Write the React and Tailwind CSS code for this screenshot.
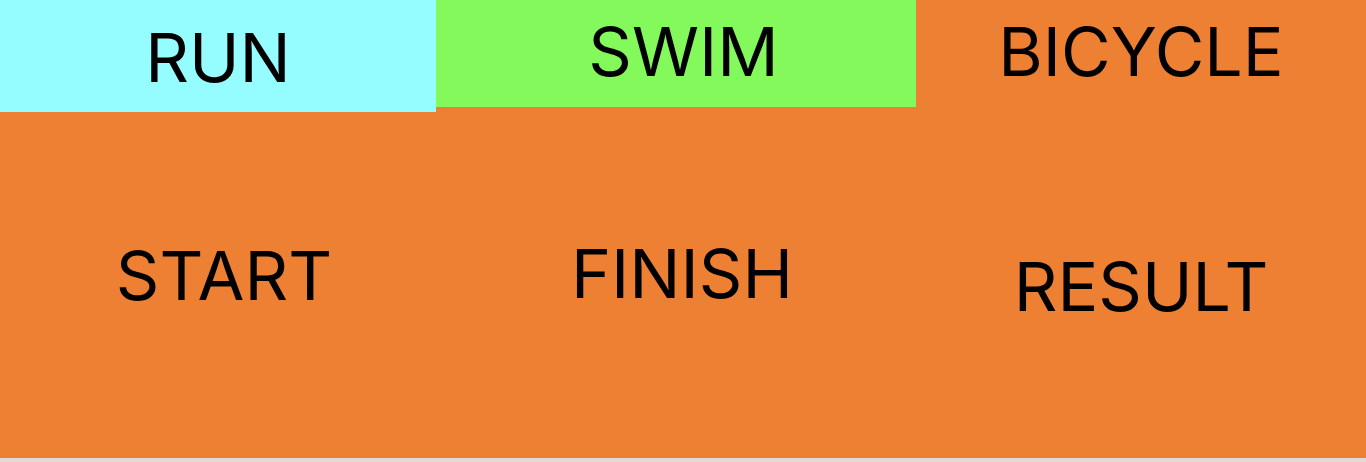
import React from 'react';

const tabs = [
    { label: 'RUN', cls: 'w-[436px] h-[112px] bg-[#95fdff] pt-[23px]' },
    { label: 'SWIM', cls: 'w-[480px] h-[107px] bg-[#84f95b] pl-[15px] pt-[17px]' },
    { label: 'BICYCLE', cls: 'flex-1 h-[107px] pt-[17px]' },
];

export default function App() {
    return (
        <div className="h-[462px] bg-[#dcdcdc] font-['Inter',sans-serif] text-black">
            <div className="h-[458px] bg-[#ee8033] flex flex-col">
                {/* Tabs */}
                <div className="flex items-start">
                    {tabs.map((t) => (
                        <div key={t.label} className={`${t.cls} flex justify-center`}>
                            <span className="text-[68px] leading-none">{t.label}</span>
                        </div>
                    ))}
                </div>

                {/* Body */}
                <div className="flex flex-1">
                    <div className="w-[448px] flex justify-center pt-[129px]">
                        <span className="text-[68px] leading-none">START</span>
                    </div>
                    <div className="w-[468px] flex justify-center pt-[127px]">
                        <span className="text-[68px] leading-none">FINISH</span>
                    </div>
                    <div className="flex-1 flex justify-center pt-[140px]">
                        <span className="text-[68px] leading-none">RESULT</span>
                    </div>
                </div>
            </div>
        </div>
    );
}
